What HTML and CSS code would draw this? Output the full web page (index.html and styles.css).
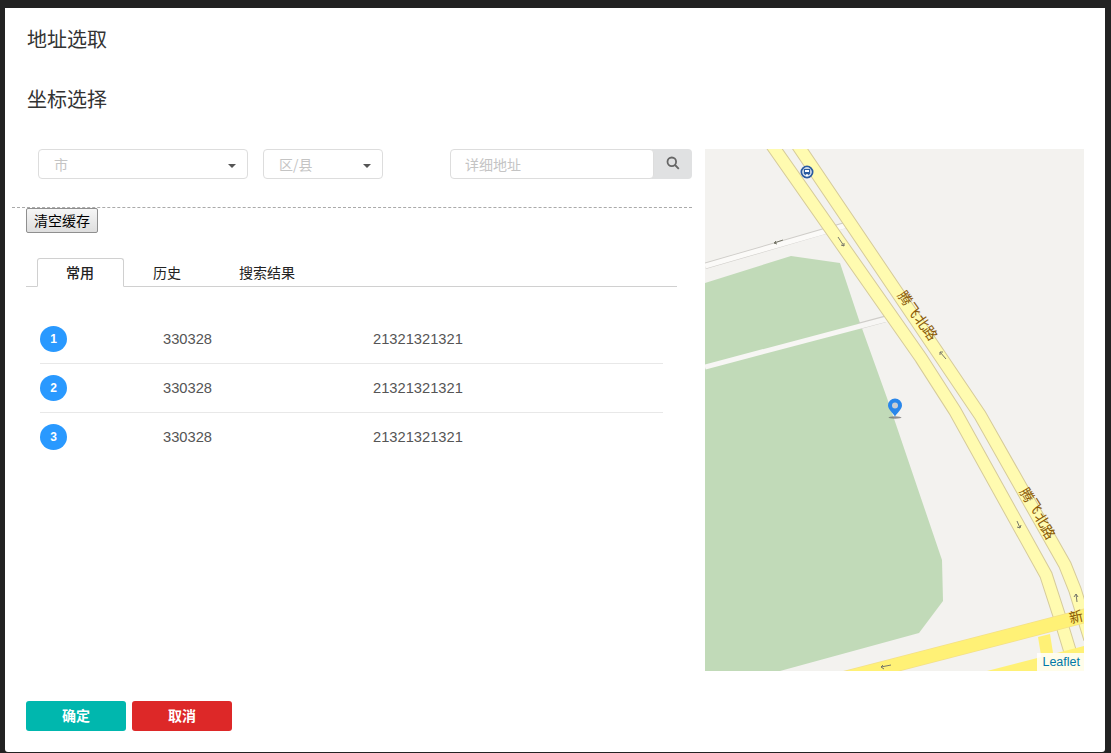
FILE: index.html
```html
<!DOCTYPE html>
<html lang="zh-CN">
<head>
    <meta charset="UTF-8">
    <title>地址选取</title>
    <link rel="stylesheet" href="styles.css">
</head>
<body>
    <div class="modal">
        <h2 class="title">地址选取</h2>
        <h2 class="title">坐标选择</h2>

        <div class="content">
            <div class="left">
                <div class="filter">
                    <div class="select select_city"><span>市</span><i class="caret"></i></div>
                    <div class="select select_area"><span>区/县</span><i class="caret"></i></div>
                    <div class="search">
                        <input type="text" placeholder="详细地址">
                        <button type="button" class="search_btn">
                            <svg width="14" height="14" viewBox="0 0 14 14">
                                <circle class="search_icon" cx="5.8" cy="5.8" r="4.3"/>
                                <path class="search_icon" d="M9 9l3.8 3.8"/>
                            </svg>
                        </button>
                    </div>
                </div>

                <button type="button" class="clear_btn">清空缓存</button>

                <div class="tabs">
                    <div class="tab active">常用</div>
                    <div class="tab">历史</div>
                    <div class="tab">搜索结果</div>
                </div>

                <div class="list">
                    <div class="row"><span class="num_col"><b class="num">1</b></span><span class="code_col">330328</span><span>21321321321</span></div>
                    <div class="row"><span class="num_col"><b class="num">2</b></span><span class="code_col">330328</span><span>21321321321</span></div>
                    <div class="row"><span class="num_col"><b class="num">3</b></span><span class="code_col">330328</span><span>21321321321</span></div>
                </div>
            </div>

            <div class="map">
                <svg width="379" height="522" viewBox="0 0 379 522">
                    <rect class="m_land" width="379" height="522"/>
                    <!-- 녹지 -->
                    <polygon class="m_green" points="0,134 86,107 135,114 154,171 182,249 237,411 238,452 214,484 75,522 0,522"/>

                    <!-- side roads -->
                    <path class="m_side_case" d="M0 117L144 75"/>
                    <path class="m_side" d="M0 117L146 75"/>
                    <path class="m_side_case" d="M154 177L180 170"/>
                    <path class="m_side2" d="M0 218L182 170"/>

                    <!-- 腾飞北路 -->
                    <path class="m_road_case" d="M55 -21L216 209L250 262L341 426L354 466L368 512"/>
                    <path class="m_road" d="M55 -21L216 209L250 262L341 426L354 466L368 512"/>
                    <path class="m_road_case" d="M81 -21L275 266L360 416L370 441L385 490"/>
                    <path class="m_road" d="M81 -21L275 266L360 416L370 441L385 490"/>

                    <!-- 新 road -->
                    <polygon class="m_main" points="333,488 345,485 349,510 337,512"/>
                    <polygon class="m_main" points="282,522 379,497 379,522"/>
                    <path class="m_main_case" d="M140 529L385 465.500"/>
                    <path class="m_main_line" d="M140 529L385 465.500"/>

                    <!-- 화살표 -->
                    <path class="m_arrow" d="M69 94l9-3M69 94l3 1M69 94l2-2"/>
                    <path class="m_arrow" d="M133 88l6 9M139 97l0-3M139 97l-3-1"/>
                    <path class="m_arrow" d="M235 203l6 7M235 203l0 3M235 203l3 0"/>
                    <path class="m_arrow" d="M312 372l3 7M315 379l1-3M315 379l-3-1"/>
                    <path class="m_arrow" d="M176 518l10-2M176 518l3 2M176 518l2-2"/>
                    <path class="m_arrow" d="M371 445l1 8M371 445l-2 3M371 445l2 3"/>

                    <!-- 도로 이름 -->
                    <text class="m_label" transform="translate(200 149) rotate(55)" y="5" text-anchor="middle">腾</text>
                    <text class="m_label" transform="translate(208 161) rotate(55)" y="5" text-anchor="middle">飞</text>
                    <text class="m_label" transform="translate(217 173) rotate(55)" y="5" text-anchor="middle">北</text>
                    <text class="m_label" transform="translate(225 184) rotate(55)" y="5" text-anchor="middle">路</text>
                    <text class="m_label" transform="translate(322 346) rotate(58)" y="5" text-anchor="middle">腾</text>
                    <text class="m_label" transform="translate(330 357) rotate(58)" y="5" text-anchor="middle">飞</text>
                    <text class="m_label" transform="translate(337 371) rotate(58)" y="5" text-anchor="middle">北</text>
                    <text class="m_label" transform="translate(343 383) rotate(58)" y="5" text-anchor="middle">路</text>
                    <text class="m_label" transform="translate(371 468) rotate(-14)" y="5" text-anchor="middle">新</text>

                    <!-- bus stop -->
                    <circle class="m_bus_ring" cx="102" cy="23" r="5.6"/>
                    <path class="m_bus" d="M99.4 19.8h5.2a.7.7 0 0 1 .7.7v4.8h-6.6v-4.8a.7.7 0 0 1 .7-.7zM100 21v2h4v-2zM99.8 25.3v1h1v-1zM103.2 25.3v1h1v-1z"/>

                    <!-- marker -->
                    <ellipse class="m_shadow" cx="190" cy="268.5" rx="6.5" ry="1.2"/>
                    <path class="m_pin" d="M190 267.5c-1.2-2.5-7-7-7-11a7 7 0 0 1 14 0c0 4-5.800 8.500-7 11z"/>
                    <circle class="m_pin_dot" cx="190" cy="256.5" r="3"/>
                </svg>
                <a class="attribution">Leaflet</a>
            </div>
        </div>

        <div class="footer">
            <button type="button" class="btn btn_ok">确定</button>
            <button type="button" class="btn btn_cancel">取消</button>
        </div>
    </div>
</body>
</html>
```

FILE: styles.css
```css
/* 지도 선택 모달 */
html, body {
    margin: 0;
    height: 100%;
}
body {
    background-color: #222;
    padding: 8px 6px 1px 5px;
    box-sizing: border-box;
    font-family: "Liberation Sans", "Noto Sans CJK SC", sans-serif;
    overflow: hidden;
}
.modal {
    height: 744px;
    padding-top: 1px;
    box-sizing: border-box;
    background-color: #fff;
    border-radius: 0 0 3px 3px;
}
.title {
    margin: 0;
    padding-left: 22px;
    font-size: 20px;
    font-weight: normal;
    line-height: 60px;
    color: #333;
    font-family: "Noto Sans CJK SC", sans-serif;
}
.content {
    display: flex;
    gap: 13px;
    margin-top: 20px;
    padding-left: 7px;
}
.left {
    width: 680px;
}

/* 검색 줄 */
.filter {
    display: flex;
    gap: 15px;
    height: 58px;
    padding-left: 26px;
    box-sizing: content-box;
    border-bottom: 1px dashed #aaa;
}
.select {
    display: flex;
    align-items: center;
    justify-content: space-between;
    height: 30px;
    padding: 0 11px 0 15px;
    box-sizing: border-box;
    border: 1px solid #ddd;
    border-radius: 4px;
    font-size: 14px;
    font-family: "Noto Sans CJK SC", sans-serif;
    color: #c4c4c4;
}
.select_city {
    width: 210px;
}
.select_area {
    width: 120px;
}
.caret {
    margin-top: 3px;
    border-top: 4px solid #555;
    border-left: 4px solid transparent;
    border-right: 4px solid transparent;
}
.search {
    display: flex;
    margin-left: auto;
    height: 30px;
}
.search input {
    position: relative;
    z-index: 1;
    width: 204px;
    height: 30px;
    padding: 0 14px;
    box-sizing: border-box;
    border: 1px solid #ddd;
    border-radius: 4px;
    font-size: 14px;
    font-family: "Noto Sans CJK SC", sans-serif;
    outline: none;
}
.search input::placeholder {
    color: #c4c4c4;
}
.search_btn {
    display: flex;
    align-items: center;
    justify-content: center;
    width: 43px;
    height: 30px;
    margin-left: -5px;
    padding: 0 0 2px 4px;
    border: 0;
    border-radius: 0 4px 4px 0;
    background-color: #e0e1e2;
}
.search_icon {
    fill: none;
    stroke: #666;
    stroke-width: 1.8;
}

.clear_btn {
    display: block;
    width: 72px;
    height: 25px;
    margin-left: 14px;
    padding: 0 0 2px;
    border: 1px solid #8f8f8f;
    border-radius: 2px;
    background: linear-gradient(#f6f6f6, #dedede);
    font-size: 14px;
    font-family: "Noto Sans CJK SC", sans-serif;
    color: #000;
}

/* 탭 */
.tabs {
    display: flex;
    height: 28px;
    width: 640px;
    margin: 25px 0 0 14px;
    padding-left: 11px;
    border-bottom: 1px solid #d0d0d0;
}
.tab {
    height: 29px;
    padding: 0 28px;
    box-sizing: border-box;
    border: 1px solid transparent;
    font-size: 14px;
    line-height: 26px;
    color: #222;
    font-family: "Noto Sans CJK SC", sans-serif;
}
.tab.active {
    padding-right: 29px;
    border-color: #d0d0d0;
    border-bottom-color: #fff;
    border-radius: 3px 3px 0 0;
    font-weight: 500;
    background-color: #fff;
}

/* 목록 */
.list {
    width: 623px;
    margin: 28px 0 0 28px;
}
.row {
    display: flex;
    align-items: center;
    height: 49px;
    padding-bottom: 1px;
    box-sizing: border-box;
    border-bottom: 1px solid #e8e8e8;
    font-size: 14.7px;
    color: #555;
}
.row:last-child {
    border-bottom: 0;
}
.num_col {
    width: 123px;
}
.code_col {
    width: 210px;
}
.num {
    display: flex;
    align-items: center;
    justify-content: center;
    width: 27px;
    height: 26px;
    border-radius: 50%;
    background-color: #2999ff;
    font-size: 12px;
    color: #fff;
}

/* 지도 */
.map {
    position: relative;
    width: 379px;
    height: 522px;
    overflow: hidden;
}
.map svg {
    display: block;
}
.m_land { fill: #f3f2ef; }
.m_green { fill: #c1dab8; }
.m_side_case { fill: none; stroke: #cfcdc9; stroke-width: 6.5; }
.m_side { fill: none; stroke: #fbfaf8; stroke-width: 5; }
.m_side2 { fill: none; stroke: #f7f6f4; stroke-width: 5; }
.m_road_case { fill: none; stroke: #d6cb9a; stroke-width: 13.5; }
.m_road { fill: none; stroke: #fffbb0; stroke-width: 11.5; }
.m_main { fill: #fff176; }
.m_main_case { fill: none; stroke: #f3e08a; stroke-width: 14.5; }
.m_main_line { fill: none; stroke: #fff176; stroke-width: 13; }
.m_arrow { fill: none; stroke: #77776a; stroke-width: 1; }
.m_label {
    font-family: "Noto Sans CJK SC", sans-serif;
    font-size: 14px;
    fill: #8a5a08;
}
.m_bus_ring { fill: #fff; stroke: #2a5ba0; stroke-width: 1.800; }
.m_bus { fill: #2a5ba0; fill-rule: evenodd; }
.m_shadow { fill: #666; opacity: .7; }
.m_pin { fill: #2a87ea; }
.m_pin_dot { fill: #c9cdd2; }
.attribution {
    position: absolute;
    right: 0;
    bottom: 0;
    height: 18px;
    padding: 0 4px 0 5px;
    background-color: rgba(255, 255, 255, .85);
    font-size: 12.5px;
    line-height: 18px;
    color: #0078a8;
}

/* 하단 버튼 */
.footer {
    display: flex;
    gap: 6px;
    margin-top: 30px;
    padding-left: 21px;
}
.btn {
    width: 100px;
    height: 30px;
    padding: 0 0 2px;
    border: 0;
    border-radius: 3px;
    font-size: 14px;
    font-weight: bold;
    font-family: "Noto Sans CJK SC", sans-serif;
    color: #fff;
}
.btn_ok {
    background-color: #00b7ae;
}
.btn_cancel {
    background-color: #dd2828;
}
```
